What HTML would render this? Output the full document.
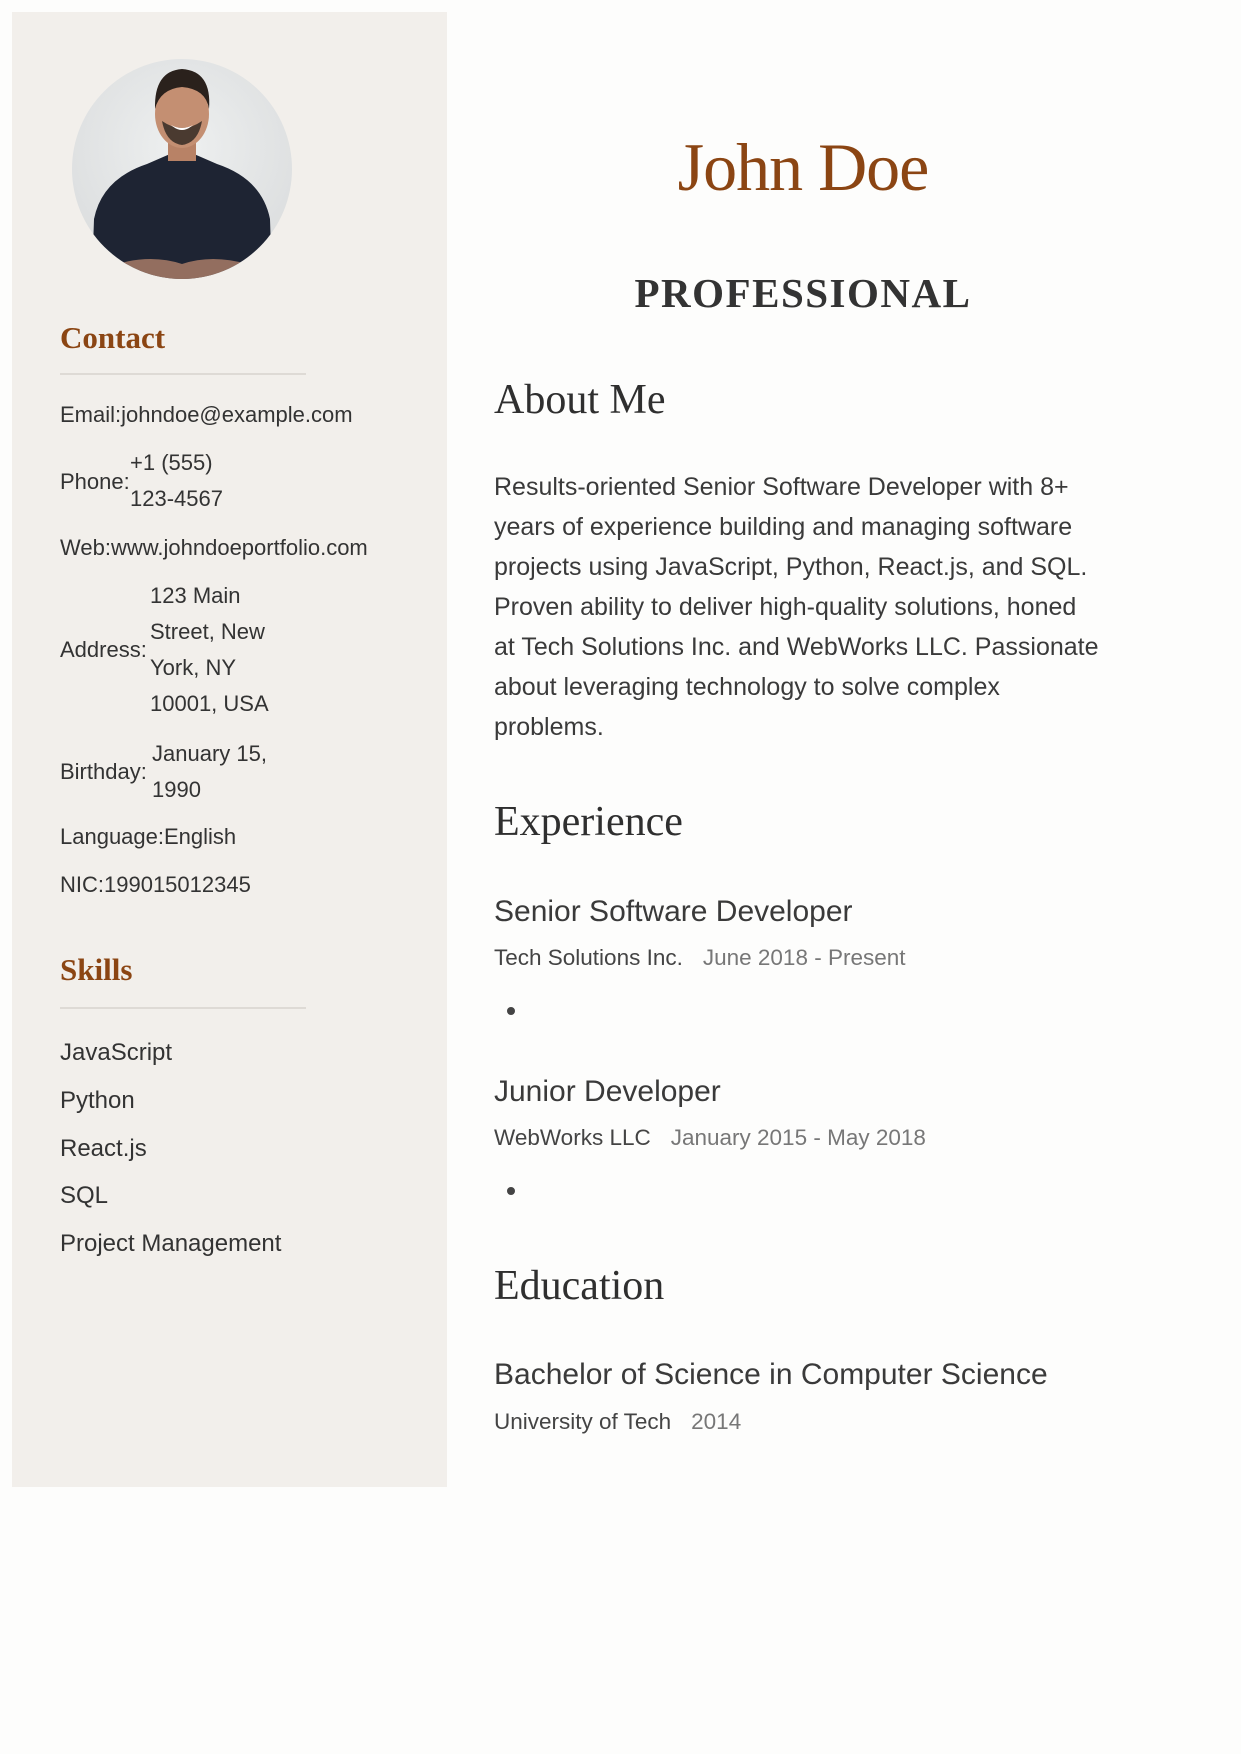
<!DOCTYPE html>
<html><head><meta charset="utf-8"><style>
*{margin:0;padding:0;box-sizing:border-box}
body{width:1241px;height:1754px;background:#fdfdfc;position:relative;font-family:"Liberation Sans",sans-serif;color:#333;overflow:hidden}
.a{position:absolute;white-space:nowrap}
.side{position:absolute;left:12px;top:12px;width:435px;height:1475px;background:#f2efeb}
.serif{font-family:"Liberation Serif",serif}
.sh{font-family:"Liberation Serif",serif;font-weight:bold;color:#8b4513;font-size:31px;line-height:40px}
.hr{position:absolute;left:60px;width:246px;height:2px;background:#dedad5}
.st{font-size:22px;line-height:36px;color:#333}
.mh{font-family:"Liberation Serif",serif;font-size:42px;line-height:50px;color:#2f2f2f}
.p{font-size:25px;line-height:40px;color:#3a3a3a}
.jt{font-size:30px;line-height:36px;color:#3a3a3a}
.co{font-size:22.5px;line-height:30px;color:#444}
.co span{color:#777;margin-left:20px}
.dot{position:absolute;width:8px;height:8px;border-radius:50%;background:#444}
</style></head><body>
<div class="side"></div>
<svg class="a" style="left:72px;top:59px" width="220" height="220" viewBox="0 0 220 220">
<defs><clipPath id="c"><circle cx="110" cy="110" r="110"/></clipPath><radialGradient id="g" cx="50%" cy="40%" r="60%"><stop offset="0" stop-color="#eef0f0"/><stop offset="1" stop-color="#dcdedf"/></radialGradient></defs>
<g clip-path="url(#c)">
<rect width="220" height="220" fill="url(#g)"/>
<path d="M20 220 L22 160 Q30 120 75 105 L98 95 L122 95 L145 105 Q190 120 198 160 L200 220Z" fill="#1e2433"/>
<rect x="96" y="78" width="28" height="24" fill="#b88266"/>
<ellipse cx="110" cy="55" rx="27" ry="34" fill="#c48f72"/>
<path d="M83 50 Q82 12 110 10 Q140 12 137 50 Q134 30 110 28 Q88 30 83 50Z" fill="#2a211c"/>
<path d="M90 62 Q110 76 130 62 Q126 84 110 86 Q94 84 90 62Z" fill="#4a3a30"/>
<path d="M99 66 Q110 72 121 66 Q110 76 99 66Z" fill="#fff"/>
<path d="M45 205 Q80 195 110 205 Q140 195 175 205 L175 220 L45 220Z" fill="#c48f72" opacity=".7"/>
</g></svg>
<div class="a sh" style="left:60px;top:318px">Contact</div>
<div class="hr" style="top:373px"></div>
<div class="a st" style="left:60px;top:397px">Email:johndoe@example.com</div>
<div class="a st" style="left:60px;top:464px">Phone:</div>
<div class="a st" style="left:130px;top:445px">+1 (555)</div>
<div class="a st" style="left:130px;top:481px">123-4567</div>
<div class="a st" style="left:60px;top:530px">Web:www.johndoeportfolio.com</div>
<div class="a st" style="left:60px;top:632px">Address:</div>
<div class="a st" style="left:150px;top:578px">123 Main<br>Street, New<br>York, NY<br>10001, USA</div>
<div class="a st" style="left:60px;top:754px">Birthday:</div>
<div class="a st" style="left:152px;top:736px">January 15,<br>1990</div>
<div class="a st" style="left:60px;top:819px">Language:English</div>
<div class="a st" style="left:60px;top:867px">NIC:199015012345</div>
<div class="a sh" style="left:60px;top:950px">Skills</div>
<div class="hr" style="top:1007px"></div>
<div class="a st" style="left:60px;top:1035px;font-size:24px">JavaScript</div>
<div class="a st" style="left:60px;top:1083px;font-size:24px">Python</div>
<div class="a st" style="left:60px;top:1131px;font-size:24px">React.js</div>
<div class="a st" style="left:60px;top:1178px;font-size:24px">SQL</div>
<div class="a st" style="left:60px;top:1226px;font-size:24px">Project Management</div>

<div class="a serif" style="left:493px;width:620px;text-align:center;top:127px;font-size:68px;line-height:80px;color:#8b4513;letter-spacing:-1px">John Doe</div>
<div class="a serif" style="left:493px;width:620px;text-align:center;top:268px;font-size:41px;line-height:50px;color:#333;font-weight:bold;letter-spacing:1.5px">PROFESSIONAL</div>
<div class="a mh" style="left:494px;top:375px">About Me</div>
<div class="a p" style="left:494px;top:467px">Results-oriented Senior Software Developer with 8+<br>years of experience building and managing software<br>projects using JavaScript, Python, React.js, and SQL.<br>Proven ability to deliver high-quality solutions, honed<br>at Tech Solutions Inc. and WebWorks LLC. Passionate<br>about leveraging technology to solve complex<br>problems.</div>
<div class="a mh" style="left:494px;top:797px">Experience</div>
<div class="a jt" style="left:494px;top:894px">Senior Software Developer</div>
<div class="a co" style="left:494px;top:943px">Tech Solutions Inc.<span>June 2018 - Present</span></div>
<div class="dot" style="left:507px;top:1007px"></div>
<div class="a jt" style="left:494px;top:1074px">Junior Developer</div>
<div class="a co" style="left:494px;top:1123px">WebWorks LLC<span>January 2015 - May 2018</span></div>
<div class="dot" style="left:507px;top:1187px"></div>
<div class="a mh" style="left:494px;top:1261px">Education</div>
<div class="a jt" style="left:494px;top:1357px">Bachelor of Science in Computer Science</div>
<div class="a co" style="left:494px;top:1407px">University of Tech<span>2014</span></div>
</body></html>
